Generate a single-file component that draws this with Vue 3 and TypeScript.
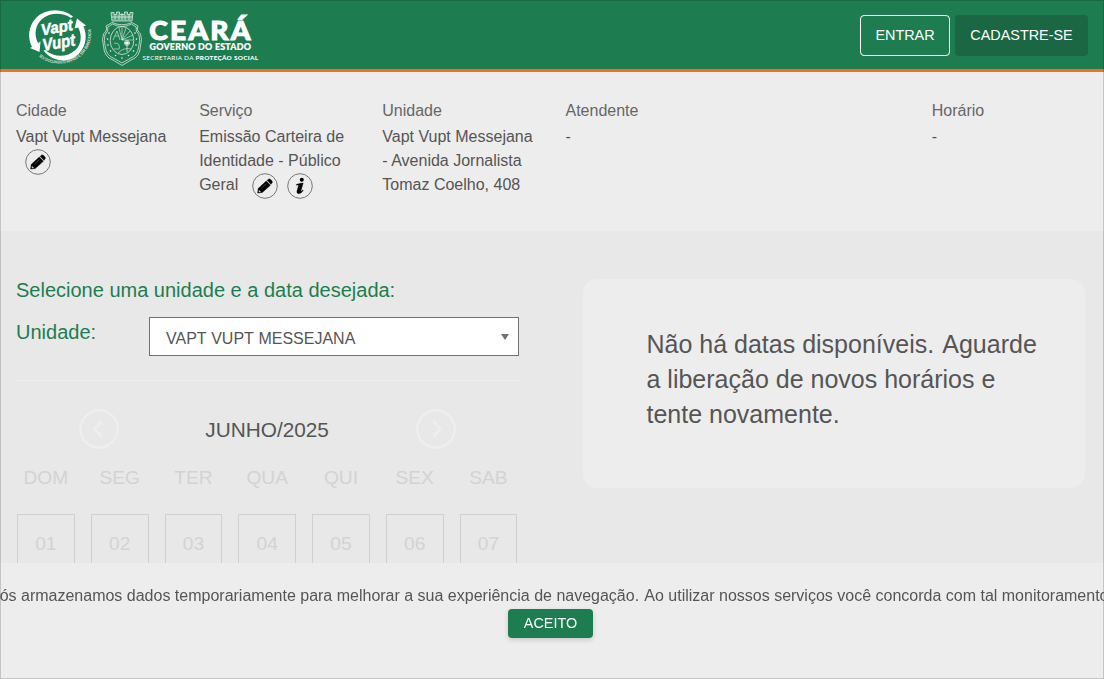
<script setup lang="ts">
interface Info {
  label: string
  value: string
  icons: string[]
  wide?: boolean
}

const infos: Info[] = [
  { label: 'Cidade', value: 'Vapt Vupt Messejana', icons: ['edit'] },
  { label: 'Serviço', value: 'Emissão Carteira de Identidade - Público Geral', icons: ['edit', 'info'] },
  { label: 'Unidade', value: 'Vapt Vupt Messejana - Avenida Jornalista Tomaz Coelho, 408', icons: [] },
  { label: 'Atendente', value: '-', icons: [], wide: true },
  { label: 'Horário', value: '-', icons: [] },
]
const weekdays: string[] = ['DOM', 'SEG', 'TER', 'QUA', 'QUI', 'SEX', 'SAB']
const days: string[] = ['01', '02', '03', '04', '05', '06', '07']
</script>

<template>
  <div class="page">
    <header class="header">
      <svg class="brand" width="262" height="69" viewBox="0 0 262 69" fill="#fff">
        <!-- Vapt Vupt emblem -->
        <path d="M73 16.500 C62 7.500 45 8.500 35.500 18.500 C28 27 27.500 38 32 47 L30 48 L39.500 52 L40.500 41.500 L38 43 C33.500 34 35.500 25 42 19 C50 12.500 62 12 71 18 Z" />
        <path d="M43.500 50.500 C53 63 70 63.500 79 53.500 C87 45 87 34 83.500 26.500 L86 25.500 L77 18.500 L74.500 28.500 L78.300 27.500 C82.500 36 81 45 75.500 50 C66.500 58 54 57.500 45 50 Z" />
        <g font-family="Liberation Sans, Arial, sans-serif" font-weight="bold" font-style="italic" stroke="#fff" stroke-width=".5">
          <text font-size="16" textLength="32" lengthAdjust="spacingAndGlyphs" transform="translate(42 35.500) rotate(-10)">Vapt</text>
          <text font-size="17" textLength="33" lengthAdjust="spacingAndGlyphs" transform="translate(43.500 51) rotate(-10)">Vupt</text>
        </g>
        <path id="motto" d="M39 56.500 A31.500 29.500 0 0 0 89.500 25" fill="none" />
        <text font-family="Lato, sans-serif" font-size="4" font-weight="bold" opacity=".85">
          <textPath href="#motto" textLength="75" lengthAdjust="spacingAndGlyphs">SEU DOCUMENTO RÁPIDO E SEM BUROCRACIA</textPath>
        </text>
        <!-- State coat of arms -->
        <g fill="none" stroke="#fff" stroke-width=".75" opacity=".88">
          <path d="M112 21 L111 12.500 H114 V14.500 H116.500 V12 H119.500 V14.500 H124.500 V12 H127.500 V14.500 H130 V12.500 H133 L132 21 Z" fill="#fff" fill-opacity=".3" />
          <path d="M112 17 H132 M115 15 V20 M119 15 V20 M122 13 V20 M125 15 V20 M129 15 V20" />
          <path d="M112 22.500 L106 26 Q108 30 103.500 34 Q101.500 39 103.500 46 Q104 57 113 60 L122 65.500 L131 60 Q140 57 140.500 46 Q142.500 39 140.500 34 Q136 30 138 26 L132 22.500 Q122 27 112 22.500 Z" />
          <path d="M112.500 24 L107.800 27 Q109 31 105 35 Q103.500 40 105.200 46 Q106 55.500 114 58.500 L122 63 L130 58.500 Q138 55.500 138.800 46 Q140.500 40 139 35 Q135 31 136.200 27 L131.500 24 Q122 29 112.500 24 Z" />
          <ellipse cx="122" cy="40.500" rx="11.800" ry="14" />
          <path d="M122 40 L119 28 M122 40 V27.500 M122 40 L126 28 M122 40 L130 31 M122 40 L133 35 M122 40 H133 M113 40 L117 31 L120 40 M115 36 H119 M114 43 Q121 43 119 49 H114 M118 53 Q124 47 131 49" stroke-width=".6" />
          <circle cx="127" cy="43" r="2.500" />
          <path d="M127 45 V52 M124 43 H130" />
        </g>
        <g opacity=".95">
          <circle cx="109" cy="33" r=".8" /><circle cx="107.500" cy="39" r=".8" /><circle cx="108" cy="45" r=".8" />
          <circle cx="110.500" cy="51" r=".8" /><circle cx="115.500" cy="55.500" r=".8" /><circle cx="122" cy="58" r=".8" />
          <circle cx="128.500" cy="55.500" r=".8" /><circle cx="133.500" cy="51" r=".8" /><circle cx="136" cy="45" r=".8" />
          <circle cx="136.500" cy="39" r=".8" /><circle cx="135" cy="33" r=".8" /><circle cx="127" cy="43" r="1.800" />
        </g>
        <g font-family="Lato, sans-serif">
          <text transform="translate(149.300 40.300) scale(1.060 1)" font-size="26.500" font-weight="900" textLength="95.500" stroke="#fff" stroke-width="1">CEARÁ</text>
          <text x="149.500" y="50" font-size="8.900" font-weight="900" textLength="101.500" stroke="#fff" stroke-width=".2">GOVERNO DO ESTADO</text>
          <text x="142.500" y="60" font-size="6.400" font-weight="400" textLength="51">SECRETARIA DA</text>
          <text x="195.500" y="60" font-size="6.400" font-weight="900" textLength="62.500">PROTEÇÃO SOCIAL</text>
        </g>
      </svg>
      <nav class="actions">
        <button class="btn outline">ENTRAR</button>
        <button class="btn dark">CADASTRE-SE</button>
      </nav>
    </header>

    <section class="infos">
      <div v-for="info in infos" :key="info.label" class="info" :class="{ wide: info.wide }">
        <div class="label">{{ info.label }}</div>
        <div class="value">
          {{ info.value }}
          <span v-for="icon in info.icons" :key="icon" class="round" :class="icon">
            <svg v-if="icon === 'edit'" width="26" height="26" viewBox="0 0 26 26">
              <circle cx="13" cy="13" r="12.300" fill="none" stroke="#777" />
              <path d="M6.200 15.500 L14.300 8 L18.300 12.300 L10.200 19.500 L5.700 20 Z M15.200 7.300 L16.500 6.200 Q17.700 5.500 18.800 6.700 L20 8 Q20.700 9.200 20 10 L18.900 11.300 Z" fill="#000" stroke="#000" stroke-width=".5" />
              <path d="M7 17.200 L8.700 18.900 L6.900 19.100 Z M9.300 15.200 L14.300 10.700" fill="#ededed" stroke="#aaa" stroke-width=".4" />
            </svg>
            <svg v-else width="26" height="26" viewBox="0 0 26 26">
              <circle cx="13" cy="13" r="12.300" fill="none" stroke="#777" />
              <circle cx="14.800" cy="6.800" r="2" fill="#000" />
              <path d="M9.300 11.500 Q12.500 9.800 16.200 10 L13.800 18.500 Q14.500 18.400 15.800 17 L16.400 17.500 Q14 21 11.300 20.700 Q9.400 20.300 9.900 18.300 L11.500 12.300 Q10.500 11.800 9.300 12.200 Z" fill="#000" stroke="#000" stroke-width=".3" />
            </svg>
          </span>
        </div>
      </div>
    </section>

    <main class="main">
      <section class="schedule">
        <h2>Selecione uma unidade e a data desejada:</h2>
        <div class="unit">
          <label>Unidade:</label>
          <div class="select">
            <span>VAPT VUPT MESSEJANA</span>
            <svg width="8" height="6" viewBox="0 0 8 6"><path d="M0 0 H8 L4 6 Z" fill="#6f7377" /></svg>
          </div>
        </div>
        <hr />
        <div class="month">
          <svg width="40" height="40" viewBox="0 0 40 40" fill="none" stroke="#eee" stroke-width="2.500">
            <circle cx="20" cy="20" r="18.700" /><path d="M23 12 L15.500 20 L23 28" />
          </svg>
          <span>JUNHO/2025</span>
          <svg width="40" height="40" viewBox="0 0 40 40" fill="none" stroke="#eee" stroke-width="2.500">
            <circle cx="20" cy="20" r="18.700" /><path d="M17 12 L24.500 20 L17 28" />
          </svg>
        </div>
        <div class="week names"><span v-for="w in weekdays" :key="w">{{ w }}</span></div>
        <div class="week days"><span v-for="d in days" :key="d">{{ d }}</span></div>
      </section>
      <aside class="notice">Não há datas disponíveis. <span class="next">Aguarde</span> a liberação de novos horários e tente novamente.</aside>
    </main>

    <footer class="cookies">
      <p>Nós armazenamos dados temporariamente para melhorar a sua experiência de navegação. <span class="next">Ao</span> utilizar nossos serviços você concorda com tal monitoramento.</p>
      <button class="accept">ACEITO</button>
    </footer>
    <div class="frame"></div>
  </div>
</template>

<style>
body { background: #e8e8e8; }
</style>

<style scoped>
* { box-sizing: border-box; }
.page {
  position: relative;
  display: flex;
  flex-direction: column;
  width: 1104px;
  height: 679px;
  overflow: hidden;
  background: #e8e8e8;
  color: #555;
  font: 16px/24px "Liberation Sans", Arial, sans-serif;
}
.header {
  display: flex;
  justify-content: space-between;
  height: 72px;
  flex: none;
  background: #1d7d50;
  border-bottom: 3px solid #f36e21;
}
.brand { display: block; }
.actions { display: flex; gap: 5px; padding: 15px 16px 0 0; }
.btn {
  height: 41px;
  padding: 0 0 2px;
  border-radius: 4px;
  color: #fff;
  font: 14.4px/20px "Liberation Sans", Arial, sans-serif;
}
.outline { width: 90px; background: transparent; border: 1px solid #fff; }
.dark { width: 133px; background: #1b6743; border: 0; }
.infos {
  display: flex;
  flex: none;
  height: 159px;
  padding: 27px 4px 0 1px;
  background: #ededed;
}
.info { width: 183.170px; padding: 0 15px; flex: none; }
.info.wide { width: 366.340px; }
.label { height: 26px; color: #666; }
.round { display: inline-block; width: 26px; height: 24px; vertical-align: top; }
.round svg { display: block; overflow: visible; }
.round.edit { margin-left: 9.400px; }
.round.info { margin-left: 9px; padding: 0; }
.main { display: flex; height: 332px; flex: none; overflow: hidden; padding-left: 16px; }
.schedule { width: 503px; flex: none; padding-top: 44px; }
h2 { margin: 0; font-size: 20px; line-height: 30px; font-weight: 400; color: #1d7d50; }
.unit { display: flex; justify-content: space-between; margin-top: 12px; height: 39px; }
.unit label { font-size: 20px; line-height: 30px; color: #1d7d50; }
.select {
  display: flex;
  align-items: center;
  justify-content: space-between;
  width: 370px;
  height: 39px;
  padding: 5px 9px 0 16px;
  border: 1px solid #6f7377;
  background: #fff;
  word-spacing: .400px;
}
.select svg { margin-top: -5px; }
hr { height: 1px; margin: 24px 0 0; border: 0; background: #eee; }
.month {
  display: flex;
  align-items: center;
  justify-content: space-between;
  margin: 28px 63.500px 0 62.700px;
  font-size: 20.800px;
}
.month span { padding-top: 2px; }
.week {
  display: grid;
  grid-template-columns: repeat(7, 73.780px);
  margin-left: -7px;
  color: #d3d3d3;
  font-size: 19.200px;
  text-align: center;
}
.names { margin-top: 17px; line-height: 24px; }
.days { margin-top: 24px; }
.days span { height: 60px; margin: 0 8px; padding-top: 17px; border: 1px solid #d0d0d0; }
.notice {
  width: 502px;
  height: 209px;
  margin: 48px 0 0 64px;
  padding: 48px 40px 0 63.500px;
  border-radius: 14px;
  background: #ededed;
  font-size: 25px;
  line-height: 35px;
}
.next { margin-left: .045em; }
.cookies {
  display: flex;
  flex: 1;
  flex-direction: column;
  align-items: center;
  padding-top: 21px;
  background: #ededed;
  will-change: transform;
}
.cookies p { margin: 0 3px 0 0; white-space: nowrap; }
.accept {
  width: 85px;
  height: 29px;
  margin: 1px 3px 0 0;
  padding: 0 0 2px;
  border: 0;
  border-radius: 4px;
  background: #1d7d50;
  box-shadow: 0 2px 5px rgba(0, 0, 0, .15);
  color: #fff;
  font: 14.400px/20px "Liberation Sans", Arial, sans-serif;
}
.frame {
  position: absolute;
  inset: 0;
  border: 1px solid rgba(0, 0, 0, .17);
  pointer-events: none;
}
</style>
